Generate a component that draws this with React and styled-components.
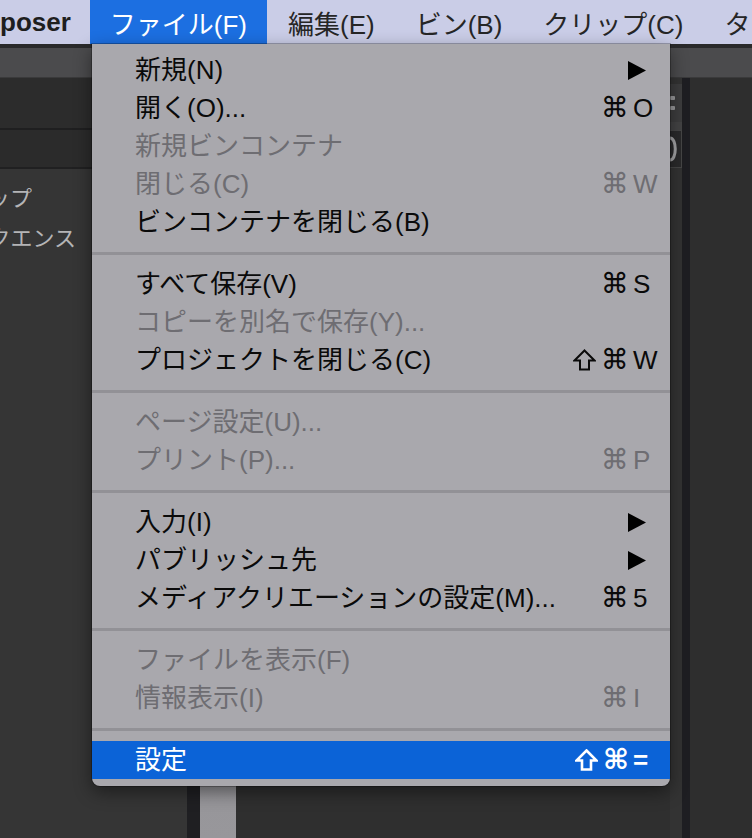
import React from 'react';
import styled, { createGlobalStyle } from 'styled-components';

const GlobalStyle = createGlobalStyle`
  html, body {
    margin: 0;
    padding: 0;
    background: #2e2e2e;
    overflow: hidden;
  }
`;

const UI_FONT = `"Liberation Sans", "Noto Sans CJK JP", sans-serif`;

const Screen = styled.div`
  position: relative;
  width: 752px;
  height: 838px;
  overflow: hidden;
  font-family: ${UI_FONT};
  display: grid;
  grid-template-rows: 44px 4px 30px 1fr;
`;

const MenuBar = styled.div`
  display: flex;
  align-items: stretch;
  background: #cacde7;
  white-space: nowrap;
  overflow: hidden;
`;

const AppName = styled.div`
  display: flex;
  align-items: center;
  padding-right: 19px;
  font-size: 26px;
  font-weight: 700;
  color: #1e1e1e;
`;

const MenuTitle = styled.div`
  display: flex;
  align-items: center;
  padding: 0 20px;
  margin-right: 1px;
  font-size: 26px;
  color: ${p => (p.$active ? '#ffffff' : '#262626')};
  background: ${p => (p.$active ? '#1c6fe1' : 'transparent')};
`;

const TopRule = styled.div`
  background: #2a2a2b;
`;

const Toolbar = styled.div`
  background: #4b4b4d;
  border-bottom: 1px solid #3a3a3b;
`;

const Panels = styled.div`
  display: grid;
  grid-template-columns: 187px 13px 36px 1fr 12px 8px 62px;
  min-height: 0;
`;

const BinPanel = styled.div`
  display: grid;
  grid-template-rows: 50px 2px 37px 2px 1fr;
  background: #353535;
`;

const BinHeader = styled.div`
  background: ${p => p.$tone};
`;

const BinList = styled.div`
  display: flex;
  flex-direction: column;
  padding-top: 7px;
`;

const BinRow = styled.div`
  height: 40px;
  display: flex;
  align-items: center;
  justify-content: flex-end;
  width: ${p => p.$end}px;
  overflow: hidden;
  white-space: nowrap;
  font-family: "Noto Sans CJK JP", sans-serif;
  font-size: 22px;
  color: #b4b4b6;
`;

const Strip = styled.div`
  background: ${p => p.$tone};
`;

const LightStrip = styled.div`
  background: linear-gradient(#858488, #8f8e92 60%, #98979b);
`;

const Viewer = styled.div`
  background: #2f2f2f;
`;

const ToolColumn = styled.div`
  display: grid;
  grid-template-rows: 6px 38px 8px 38px 1fr;
  background: #333333;
`;

const ToolSlot = styled.div`
  display: flex;
  flex-direction: column;
  justify-content: center;
  gap: 6px;
  background: ${p => p.$tone};
  border: ${p => (p.$outlined ? '1px solid #474747' : 'none')};
  border-left: none;
`;

const ToolMark = styled.div`
  width: 5px;
  height: 4px;
  border-radius: 1px;
  background: #9a9a9c;
`;

const RightPanel = styled.div`
  background: #2e2e2e;
`;

/* dropdown */

const Dropdown = styled.div`
  position: absolute;
  top: 44px;
  left: 92px;
  width: 578px;
  padding: 7px 0;
  box-sizing: border-box;
  background: #a9a8ad;
  border-radius: 0 0 8px 8px;
  box-shadow: 0 6px 18px rgba(0, 0, 0, 0.45), 0 0 0 1px rgba(0, 0, 0, 0.25);
`;

const Item = styled.div`
  height: 38px;
  display: grid;
  grid-template-columns: 1fr auto 37px;
  column-gap: 4px;
  align-items: center;
  padding-left: 43px;
  font-size: 26px;
  line-height: 1;
  white-space: nowrap;
  color: ${p => (p.$selected ? '#ffffff' : p.$disabled ? '#6e6d72' : '#0a0a0a')};
  background: ${p => (p.$selected ? '#0b63d7' : 'transparent')};
`;

const Label = styled.span`
  min-width: 0;
`;

const Mods = styled.span`
  justify-self: end;
  display: flex;
  align-items: center;
  gap: 5px;
`;

const Command = styled.span`
  font-family: "DejaVu Sans", sans-serif;
  font-size: 28px;
  font-weight: ${p => (p.$bold ? 700 : 400)};
  line-height: 1;
`;

const Key = styled.span`
  justify-self: start;
  font-size: 26px;
  font-weight: ${p => (p.$bold ? 700 : 400)};
`;

const Submenu = styled.svg`
  grid-column: 2 / 4;
  justify-self: end;
  margin-right: 24px;
`;

const Separator = styled.div`
  height: 24px;
  display: flex;
  align-items: center;

  &::before {
    content: '';
    flex: 1;
    height: 3px;
    background: #929196;
  }
`;

const ShiftIcon = ({ bold }) => (
  <svg width="23" height="22" viewBox="0 0 23 22">
    <path
      d="M11.5 1.5 L21.5 11.5 L16 11.5 L16 20.5 L7 20.5 L7 11.5 L1.5 11.5 Z"
      fill="none"
      stroke="currentColor"
      strokeWidth={bold ? 2.6 : 2}
      strokeLinejoin="miter"
    />
  </svg>
);

const groups = [
  [
    { label: '新規(N)', submenu: true },
    { label: '開く(O)...', cmd: true, key: 'O' },
    { label: '新規ビンコンテナ', disabled: true },
    { label: '閉じる(C)', cmd: true, key: 'W', disabled: true },
    { label: 'ビンコンテナを閉じる(B)' },
  ],
  [
    { label: 'すべて保存(V)', cmd: true, key: 'S' },
    { label: 'コピーを別名で保存(Y)...', disabled: true },
    { label: 'プロジェクトを閉じる(C)', shift: true, cmd: true, key: 'W' },
  ],
  [
    { label: 'ページ設定(U)...', disabled: true },
    { label: 'プリント(P)...', cmd: true, key: 'P', disabled: true },
  ],
  [
    { label: '入力(I)', submenu: true },
    { label: 'パブリッシュ先', submenu: true },
    { label: 'メディアクリエーションの設定(M)...', cmd: true, key: '5' },
  ],
  [
    { label: 'ファイルを表示(F)', disabled: true },
    { label: '情報表示(I)', cmd: true, key: 'I', disabled: true },
  ],
  [{ label: '設定', shift: true, cmd: true, key: '=', selected: true }],
];

const menus = ['編集(E)', 'ビン(B)', 'クリップ(C)', 'タイムライン(T)'];

const MenuItem = ({ item }) => (
  <Item $disabled={item.disabled} $selected={item.selected}>
    <Label>{item.label}</Label>
    {item.submenu ? (
      <Submenu width="18" height="19" viewBox="0 0 18 19">
        <polygon points="0,0 18,9.5 0,19" fill="#000" />
      </Submenu>
    ) : (
      <>
        <Mods>
          {item.shift && <ShiftIcon bold={item.selected} />}
          {item.cmd && <Command $bold={item.selected}>⌘</Command>}
        </Mods>
        <Key $bold={item.selected}>{item.key}</Key>
      </>
    )}
  </Item>
);

const App = () => (
  <Screen>
    <GlobalStyle />
    <MenuBar>
      <AppName>poser</AppName>
      <MenuTitle $active>ファイル(F)</MenuTitle>
      {menus.map(m => (
        <MenuTitle key={m}>{m}</MenuTitle>
      ))}
    </MenuBar>
    <TopRule />
    <Toolbar />
    <Panels>
      <BinPanel>
        <BinHeader $tone="#2c2c2c" />
        <BinHeader $tone="#1f1f20" />
        <BinHeader $tone="#2b2b2b" />
        <BinHeader $tone="#202021" />
        <BinList>
          <BinRow $end={32}>ップ</BinRow>
          <BinRow $end={76}>クエンス</BinRow>
        </BinList>
      </BinPanel>
      <Strip $tone="#1f1f22" />
      <LightStrip />
      <Viewer />
      <ToolColumn>
        <span />
        <ToolSlot $tone="#3d3d3e">
          <ToolMark />
          <ToolMark />
        </ToolSlot>
        <ToolSlot $tone="#434344" />
        <ToolSlot $tone="#2a2a2b" $outlined>
          <svg width="8" height="26" viewBox="0 0 8 26">
            <path d="M0 2 C 7 2, 7 24, 0 24" stroke="#a4a4a6" strokeWidth="3" fill="none" />
          </svg>
        </ToolSlot>
        <span />
      </ToolColumn>
      <Strip $tone="#1e1e22" />
      <RightPanel />
    </Panels>

    <Dropdown>
      {groups.map((group, gi) => (
        <React.Fragment key={gi}>
          {gi > 0 && <Separator />}
          {group.map(item => (
            <MenuItem key={item.label} item={item} />
          ))}
        </React.Fragment>
      ))}
    </Dropdown>
  </Screen>
);

export default App;
